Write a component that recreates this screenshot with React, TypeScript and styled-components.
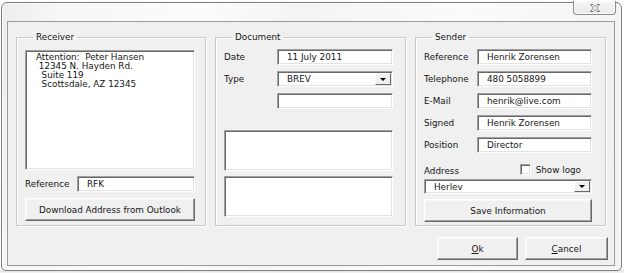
import React from 'react';
import styled, { createGlobalStyle } from 'styled-components';

const Global = createGlobalStyle`
  html, body { margin: 0; padding: 0; background: #ffffff; }
  body { font-family: "DejaVu Sans", Tahoma, sans-serif; font-size: 8.8px; color: #151515; }
  * { box-sizing: border-box; }
`;

const Page = styled.div`
  width: 624px;
  height: 273px;
  padding: 2px 2px 2px 1px;
  background: linear-gradient(#fafafa, #ffffff 2px, #ffffff 268px, #e2e2e2 271px, #f4f4f4);
`;

const Window = styled.div`
  width: 621px;
  height: 269px;
  border: 1px solid #7c7c7c;
  border-radius: 6px 6px 5px 5px;
  background: linear-gradient(100deg, #ececec 0%, #f6f6f6 8%, #fcfcfc 30%, #f4f4f4 45%, #fbfbfb 70%, #f2f2f2 100%);
  box-shadow: inset 0 0 0 1px #fdfdfd;
  padding: 0 6px 4px 5px;
  display: flex;
  flex-direction: column;
`;

const TitleBar = styled.div`
  height: 18px;
  display: flex;
  justify-content: flex-end;
  align-items: flex-start;
`;

const CloseButton = styled.div`
  width: 43px;
  height: 14px;
  margin-top: -2px;
  margin-right: -1px;
  border: 1px solid #8c8c8c;
  border-top: none;
  border-radius: 0 0 4px 4px;
  background: linear-gradient(#f6f6f6, #e9e9e9);
  box-shadow: inset 0 0 0 1px #fcfcfc;
  display: flex;
  align-items: center;
  justify-content: center;
`;

const Client = styled.div`
  flex: 1;
  border: 1px solid #9c9c9c;
  background: #f0f0f0;
  display: flex;
  flex-direction: column;
  padding: 10px 6px 0 8px;
`;

const GroupsRow = styled.div`
  display: flex;
  gap: 9px;
`;

const Group = styled.fieldset<{ $w: number; $pr: number }>`
  margin: 0;
  width: ${p => p.$w}px;
  height: 194px;
  padding: 6px ${p => p.$pr}px 0 8px;
  border: 1px solid #c9c9c9;
  box-shadow: inset 1px 1px 0 #ffffff, 1px 1px 0 #ffffff;
  min-inline-size: 0;
  display: flex;
  flex-direction: column;
`;

const Legend = styled.legend`
  margin-left: 8px;
  padding: 0 3px;
  line-height: 11px;
`;

const Stack = styled.div<{ $gap: number; $mt?: number }>`
  display: flex;
  flex-direction: column;
  gap: ${p => p.$gap}px;
  margin-top: ${p => p.$mt ?? 0}px;
  flex: none;
`;

const Row = styled.div<{ $h?: number }>`
  display: flex;
  align-items: center;
  height: ${p => p.$h ?? 16}px;
  flex: none;
`;

const Label = styled.span<{ $w: number }>`
  width: ${p => p.$w}px;
  flex: none;
  white-space: nowrap;
`;

const sunken = `
  background: #ffffff;
  border-style: solid;
  border-width: 1px;
  border-color: #a0a0a0 #ffffff #ffffff #a0a0a0;
  box-shadow: inset 1px 1px 0 #696969, inset -1px -1px 0 #e3e3e3;
`;

const TextBox = styled.input`
  ${sunken}
  flex: 1;
  min-width: 0;
  height: 16px;
  padding: 0 0 0 9px;
  font: inherit;
  color: #151515;
  outline: none;
`;

const Memo = styled.textarea<{ $h: number }>`
  ${sunken}
  height: ${p => p.$h}px;
  width: 100%;
  flex: none;
  resize: none;
  overflow: hidden;
  font: inherit;
  line-height: 9px;
  color: #151515;
  padding: 2px 0 0 10px;
  outline: none;
  white-space: pre;
`;

const Combo = styled.div`
  ${sunken}
  flex: 1;
  height: 100%;
  display: flex;
  align-items: center;
  padding-left: 9px;
`;

const ComboText = styled.span`
  flex: 1;
`;

const DropButton = styled.div`
  width: 16px;
  align-self: stretch;
  margin: 1px;
  background: #f0f0f0;
  border-style: solid;
  border-width: 1px;
  border-color: #ffffff #696969 #696969 #ffffff;
  display: flex;
  align-items: center;
  justify-content: center;
`;

const Arrow = styled.span`
  width: 0;
  height: 0;
  border-left: 3px solid transparent;
  border-right: 3px solid transparent;
  border-top: 3px solid #000;
`;

const Button = styled.button<{ $w?: number }>`
  height: 23px;
  flex: none;
  width: ${p => (p.$w ? `${p.$w}px` : '100%')};
  font: inherit;
  color: #151515;
  background: #f0f0f0;
  border-style: solid;
  border-width: 1px;
  border-color: #ffffff #696969 #696969 #ffffff;
  box-shadow: inset -1px -1px 0 #a0a0a0, inset 1px 1px 0 #f8f8f8;
  padding: 0;
  cursor: default;
`;

const AddressRow = styled.div`
  display: flex;
  align-items: flex-end;
  justify-content: space-between;
  height: 13px;
  padding-right: 11px;
  flex: none;
`;

const CheckWrap = styled.label`
  display: flex;
  align-items: center;
  gap: 5px;
  margin-bottom: 1px;
`;

const CheckBox = styled.span`
  ${sunken}
  width: 11px;
  height: 11px;
  display: inline-block;
`;

const Footer = styled.div`
  display: flex;
  justify-content: flex-end;
  gap: 7px;
  margin-top: 11px;
`;

const U = styled.span`
  text-decoration: underline;
`;

const CloseGlyph = () => (
  <svg width="12" height="8" viewBox="0 0 12 8">
    <path
      d="M1.5 0.5 H4 L6 2.5 L8 0.5 H10.5 L7.5 4 L10.5 7.5 H8 L6 5.5 L4 7.5 H1.5 L4.5 4 Z"
      fill="#ffffff"
      stroke="#6e6e6e"
      strokeWidth="0.9"
      strokeLinejoin="round"
    />
  </svg>
);

const address = 'Attention:  Peter Hansen\n 12345 N. Hayden Rd.\n  Suite 119\n  Scottsdale, AZ 12345';

export default function App() {
  return (
    <>
      <Global />
      <Page>
        <Window>
          <TitleBar>
            <CloseButton>
              <CloseGlyph />
            </CloseButton>
          </TitleBar>
          <Client>
            <GroupsRow>
              <Group $w={190} $pr={10}>
                <Legend>Receiver</Legend>
                <Stack $gap={6} $mt={1}>
                  <Memo $h={120} readOnly value={address} />
                  <Row>
                    <Label $w={52}>Reference</Label>
                    <TextBox readOnly value="RFK" />
                  </Row>
                  <Button>Download Address from Outlook</Button>
                </Stack>
              </Group>

              <Group $w={191} $pr={12}>
                <Legend>Document</Legend>
                <Stack $gap={6}>
                  <Row>
                    <Label $w={53}>Date</Label>
                    <TextBox readOnly value="11 July 2011" />
                  </Row>
                  <Row>
                    <Label $w={53}>Type</Label>
                    <Combo>
                      <ComboText>BREV</ComboText>
                      <DropButton>
                        <Arrow />
                      </DropButton>
                    </Combo>
                  </Row>
                  <Row>
                    <Label $w={53} />
                    <TextBox readOnly value="" />
                  </Row>
                </Stack>
                <Stack $gap={5} $mt={21}>
                  <Memo $h={41} readOnly value="" />
                  <Memo $h={41} readOnly value="" />
                </Stack>
              </Group>

              <Group $w={191} $pr={13}>
                <Legend>Sender</Legend>
                <Stack $gap={6}>
                  <Row>
                    <Label $w={53}>Reference</Label>
                    <TextBox readOnly value="Henrik Zorensen" />
                  </Row>
                  <Row>
                    <Label $w={53}>Telephone</Label>
                    <TextBox readOnly value="480 5058899" />
                  </Row>
                  <Row>
                    <Label $w={53}>E-Mail</Label>
                    <TextBox readOnly value="henrik@live.com" />
                  </Row>
                  <Row>
                    <Label $w={53}>Signed</Label>
                    <TextBox readOnly value="Henrik Zorensen" />
                  </Row>
                  <Row>
                    <Label $w={53}>Position</Label>
                    <TextBox readOnly value="Director" />
                  </Row>
                </Stack>
                <Stack $gap={3} $mt={10}>
                  <AddressRow>
                    <span>Address</span>
                    <CheckWrap>
                      <CheckBox />
                      Show logo
                    </CheckWrap>
                  </AddressRow>
                  <Row $h={15}>
                    <Combo>
                      <ComboText>Herlev</ComboText>
                      <DropButton>
                        <Arrow />
                      </DropButton>
                    </Combo>
                  </Row>
                </Stack>
                <Stack $gap={0} $mt={5}>
                  <Button>Save Information</Button>
                </Stack>
              </Group>
            </GroupsRow>
            <Footer>
              <Button $w={81}>
                <U>O</U>k
              </Button>
              <Button $w={83}>
                <U>C</U>ancel
              </Button>
            </Footer>
          </Client>
        </Window>
      </Page>
    </>
  );
}
